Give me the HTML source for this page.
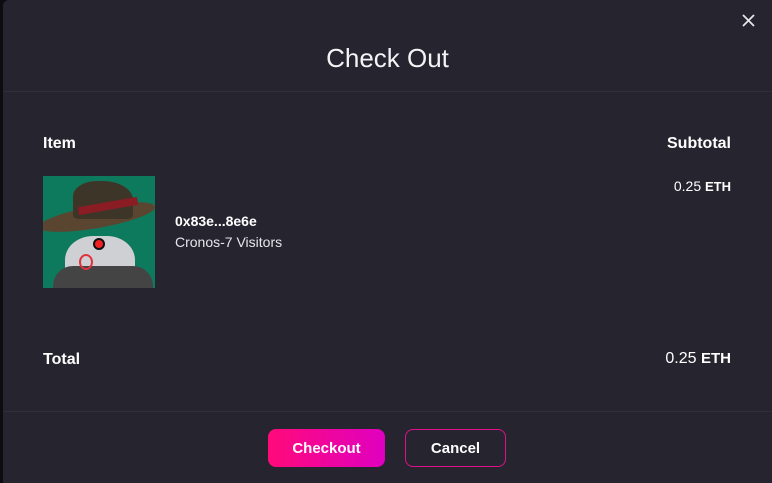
<!DOCTYPE html>
<html><head><meta charset="utf-8"><style>
*{margin:0;padding:0;box-sizing:border-box}
body{width:772px;height:483px;background:#0c0d10;font-family:"Liberation Sans",sans-serif;color:#fff;overflow:hidden;position:relative}
.m{position:absolute;left:3px;top:0;width:769px;height:483px;background:#26242f;border-radius:6px 0 0 0}
.t{position:absolute;top:43px;width:100%;text-align:center;font-size:26px;color:#f4f4f6}
.hr{position:absolute;left:0;width:100%;height:1px;background:#302e3a}
.b{font-weight:bold;font-size:16px}
.img{position:absolute;left:40px;top:176px;width:112px;height:112px;background:#0e7a5d;overflow:hidden}
.btn{position:absolute;top:429px;height:38px;border-radius:8px;font-weight:bold;font-size:15px;display:flex;align-items:center;justify-content:center}
</style></head><body>
<div class="m">
<div class="t">Check Out</div>
<svg style="position:absolute;left:739px;top:14px" width="13" height="13" viewBox="0 0 13 13"><path d="M1 1L12 12M12 1L1 12" stroke="#e6e6ea" stroke-width="1.8"/></svg>
<div class="hr" style="top:91px"></div>
<div class="b" style="position:absolute;left:40px;top:135px">Item</div>
<div class="b" style="position:absolute;right:41px;top:135px">Subtotal</div>
<div class="img">
 <div style="position:absolute;left:22px;top:60px;width:70px;height:60px;background:#cfd0d4;border-radius:40% 40% 10% 10%"></div>
 <div style="position:absolute;left:10px;top:90px;width:100px;height:30px;background:#444;border-radius:20px 20px 0 0"></div>
 <div style="position:absolute;left:-5px;top:30px;width:118px;height:22px;background:#5a4630;border-radius:50%;transform:rotate(-10deg)"></div>
 <div style="position:absolute;left:30px;top:5px;width:60px;height:38px;background:#3d3528;border-radius:40% 50% 10% 10%"></div>
 <div style="position:absolute;left:35px;top:26px;width:60px;height:8px;background:#8a1c24;transform:rotate(-10deg)"></div>
 <div style="position:absolute;left:50px;top:62px;width:12px;height:12px;border:2px solid #111;border-radius:50%;background:#e22"></div>
 <div style="position:absolute;left:36px;top:78px;width:14px;height:16px;border:2px solid #e0323e;border-radius:50%"></div>
</div>
<div class="b" style="position:absolute;left:172px;top:213px;font-size:14px">0x83e...8e6e</div>
<div style="position:absolute;left:172px;top:234px;font-size:14px;color:#e6e6ea">Cronos-7 Visitors</div>
<div style="position:absolute;right:41px;top:178px;font-size:14px">0.25 <b style="font-size:13px">ETH</b></div>
<div class="b" style="position:absolute;left:40px;top:351px">Total</div>
<div style="position:absolute;right:41px;top:350px;font-size:16px">0.25 <b style="font-size:15px">ETH</b></div>
<div class="hr" style="top:411px"></div>
<div class="btn" style="left:265px;width:117px;background:linear-gradient(90deg,#ff0a7a,#e000c0)">Checkout</div>
<div class="btn" style="left:402px;width:101px;border:1px solid #e0108a">Cancel</div>
</div>
</body></html>
